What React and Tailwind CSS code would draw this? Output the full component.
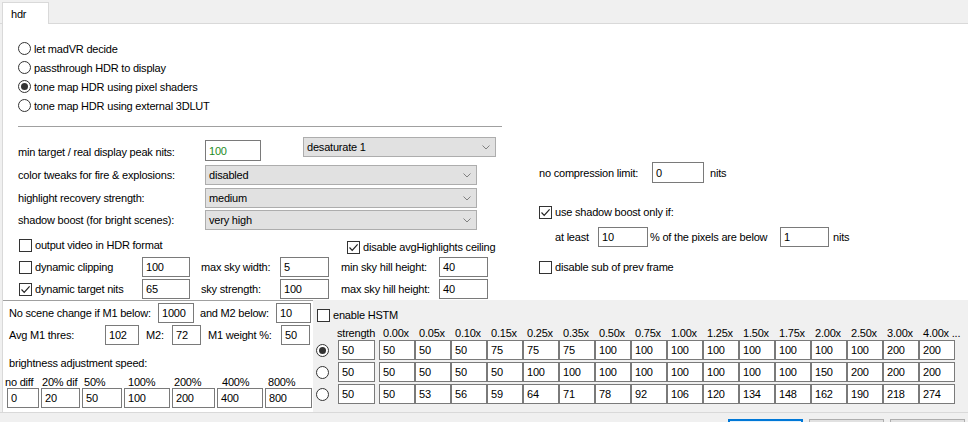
import React from "react";

const Box = ({ w, children, green }) => (
  <div
    className={`${w} h-full shrink-0 border border-[#7a7a7a] bg-white flex items-center pl-[3px] overflow-hidden whitespace-nowrap ${
      green ? "text-[#1e8b1e]" : ""
    }`}
  >
    {children}
  </div>
);

const Check = ({ checked }) => (
  <span className="w-[13px] h-[13px] shrink-0 border border-[#333333] bg-white flex items-center justify-center">
    {checked && (
      <svg width="11" height="11" viewBox="0 0 11 11">
        <path d="M1.5 5.5 L4.2 8.3 L9.6 2.4" fill="none" stroke="#222" strokeWidth="1.2" />
      </svg>
    )}
  </span>
);

const Radio = ({ checked }) => (
  <span className="w-[13px] h-[13px] shrink-0 rounded-full border border-[#333333] bg-white flex items-center justify-center">
    {checked && <span className="w-[7px] h-[7px] rounded-full bg-[#333333]" />}
  </span>
);

const Select = ({ w, value }) => (
  <div className={`${w} h-[20px] shrink-0 border border-[#adadad] bg-[#e1e1e1] flex items-center pl-[3px] pr-[5px]`}>
    <span className="flex-1 whitespace-nowrap">{value}</span>
    <svg width="8" height="5" viewBox="0 0 8 5">
      <path d="M0.5 0.5 L4 4 L7.5 0.5" fill="none" stroke="#808080" strokeWidth="1" />
    </svg>
  </div>
);

const radios = [
  ["let madVR decide", false],
  ["passthrough HDR to display", false],
  ["tone map HDR using pixel shaders", true],
  ["tone map HDR using external 3DLUT", false],
];

const headers = ["0.00x", "0.05x", "0.10x", "0.15x", "0.25x", "0.35x", "0.50x", "0.75x", "1.00x", "1.25x", "1.50x", "1.75x", "2.00x", "2.50x", "3.00x", "4.00x ..."];

const rows = [
  [true, [50, 50, 50, 75, 75, 75, 100, 100, 100, 100, 100, 100, 100, 100, 200, 200]],
  [false, [50, 50, 50, 50, 100, 100, 100, 100, 100, 100, 100, 100, 150, 200, 200, 200]],
  [false, [50, 53, 56, 59, 64, 71, 78, 92, 106, 120, 134, 148, 162, 190, 218, 274]],
];

const speedHeads = [
  ["no diff", "w-[37px]"],
  ["20% dif", "w-[42px]"],
  ["50%", "w-[44px]"],
  ["100%", "w-[46px]"],
  ["200%", "w-[48px]"],
  ["400%", "w-[46px]"],
  ["800%", "w-[44px]"],
];

const speedBoxes = [
  ["0", "w-[32px]"],
  ["20", "w-[39px]"],
  ["50", "w-[40px]"],
  ["100", "w-[46px]"],
  ["200", "w-[43px]"],
  ["400", "w-[46px]"],
  ["800", "w-[47px]"],
];

export default function App() {
  return (
    <div className="w-[968px] h-[422px] overflow-hidden bg-[#f0f0f0] text-black text-[11px] leading-[14px] tracking-[-0.2px] font-['Liberation_Sans',Arial,sans-serif] flex flex-col">
      {/* tab strip */}
      <div className="h-[24px] flex shrink-0">
        <div className="w-[2px] border-b border-[#d9d9d9]" />
        <div className="w-[47px] h-[22px] self-end bg-white border-x border-t border-[#d9d9d9] pl-[8px] pt-[4px]">hdr</div>
        <div className="flex-1 border-b border-[#d9d9d9]" />
      </div>

      {/* panel */}
      <div className="ml-[2px] h-[388px] shrink-0 border-l border-[#d9d9d9] bg-white flex flex-col">
        {/* upper section */}
        <div className="h-[276px] flex">
          <div className="w-[533px] flex flex-col pt-[15px]">
            <div className="pl-[15px] flex flex-col">
              {radios.map(([t, c]) => (
                <div key={t} className="h-[19px] flex items-center gap-[3px]">
                  <Radio checked={c} />
                  <span>{t}</span>
                </div>
              ))}
            </div>
            <div className="ml-[15px] w-[484px] h-px bg-[#a0a0a0] mt-[11px]" />

            <div className="mt-[10px] h-[24px] flex items-start pl-[15px]">
              <span className="w-[187px] mt-[8px]">min target / real display peak nits:</span>
              <div className="h-[21px] mt-[3px]">
                <Box w="w-[56px]" green>100</Box>
              </div>
              <div className="ml-[42px]">
                <Select w="w-[193px]" value="desaturate 1" />
              </div>
            </div>
            <div className="mt-[4px] h-[20px] flex items-center pl-[15px]">
              <span className="w-[187px]">color tweaks for fire &amp; explosions:</span>
              <Select w="w-[272px]" value="disabled" />
            </div>
            <div className="mt-[3px] h-[20px] flex items-center pl-[15px]">
              <span className="w-[187px]">highlight recovery strength:</span>
              <Select w="w-[272px]" value="medium" />
            </div>
            <div className="mt-[2px] h-[20px] flex items-center pl-[15px]">
              <span className="w-[187px]">shadow boost (for bright scenes):</span>
              <Select w="w-[272px]" value="very high" />
            </div>

            <div className="mt-[7px] h-[16px] flex items-center pl-[16px]">
              <span className="w-[328px] flex items-center gap-[3px]">
                <Check />
                <span>output video in HDR format</span>
              </span>
              <span className="flex items-center gap-[3px] mt-[4px]">
                <Check checked />
                <span>disable avgHighlights ceiling</span>
              </span>
            </div>

            <div className="mt-[4px] h-[20px] flex items-center pl-[16px]">
              <span className="w-[123px] flex items-center gap-[3px]">
                <Check />
                <span>dynamic clipping</span>
              </span>
              <Box w="w-[48px]">100</Box>
              <span className="ml-[11px] w-[79px]">max sky width:</span>
              <Box w="w-[49px]">5</Box>
              <span className="ml-[12px] w-[98px]">min sky hill height:</span>
              <Box w="w-[49px]">40</Box>
            </div>
            <div className="mt-[2px] h-[20px] flex items-center pl-[16px]">
              <span className="w-[123px] flex items-center gap-[3px]">
                <Check checked />
                <span>dynamic target nits</span>
              </span>
              <Box w="w-[48px]">65</Box>
              <span className="ml-[11px] w-[79px]">sky strength:</span>
              <Box w="w-[49px]">100</Box>
              <span className="ml-[12px] w-[98px]">max sky hill height:</span>
              <Box w="w-[49px]">40</Box>
            </div>
          </div>

          <div className="flex-1 flex flex-col pl-[3px] pt-[138px]">
            <div className="h-[21px] flex items-center">
              <span className="w-[113px]">no compression limit:</span>
              <Box w="w-[52px]">0</Box>
              <span className="ml-[6px]">nits</span>
            </div>
            <div className="mt-[21px] h-[16px] flex items-center gap-[3px]">
              <Check checked />
              <span>use shadow boost only if:</span>
            </div>
            <div className="mt-[7px] h-[20px] flex items-center pl-[16px]">
              <span className="w-[43px]">at least</span>
              <Box w="w-[50px]">10</Box>
              <span className="ml-[2px] w-[130px]">% of the pixels are below</span>
              <Box w="w-[49px]">1</Box>
              <span className="ml-[4px]">nits</span>
            </div>
            <div className="mt-[12px] h-[16px] flex items-center gap-[3px]">
              <Check />
              <span>disable sub of prev frame</span>
            </div>
          </div>
        </div>

        {/* lower section */}
        <div className="h-[112px] flex">
          <div className="w-[310px] shrink-0 border-t border-[#a0a0a0] flex flex-col">
            <div className="mt-[2px] h-[20px] flex items-center pl-[6px]">
              <span className="w-[149px]">No scene change if M1 below:</span>
              <Box w="w-[36px]">1000</Box>
              <span className="ml-[6px] w-[76px]">and M2 below:</span>
              <Box w="w-[35px]">10</Box>
            </div>
            <div className="mt-[2px] h-[20px] flex items-center pl-[6px]">
              <span className="w-[96px]">Avg M1 thres:</span>
              <Box w="w-[34px]">102</Box>
              <span className="ml-[7px] w-[26px]">M2:</span>
              <Box w="w-[29px]">72</Box>
              <span className="ml-[7px] w-[73px]">M1 weight %:</span>
              <Box w="w-[29px]">50</Box>
            </div>
            <div className="mt-[10px] h-[16px] flex items-center pl-[6px]">brightness adjustment speed:</div>
            <div className="mt-[4px] h-[13px] flex items-center pl-[2px] whitespace-nowrap">
              {speedHeads.map(([t, w]) => (
                <span key={t} className={w}>
                  {t}
                </span>
              ))}
            </div>
            <div className="h-[20px] flex pl-[4px] gap-[2px]">
              {speedBoxes.map(([t, w]) => (
                <Box key={t} w={w}>
                  {t}
                </Box>
              ))}
            </div>
          </div>

          <div className="flex-1 bg-[#f0f0f0] flex flex-col">
            <div className="mt-[8px] h-[14px] flex items-center pl-[4px] gap-[3px]">
              <Check />
              <span>enable HSTM</span>
            </div>
            <div className="mt-[4px] h-[14px] flex items-center pl-[24px] whitespace-nowrap">
              <span className="w-[46px] shrink-0">strength</span>
              {headers.map((h) => (
                <span key={h} className="w-[36px] shrink-0">
                  {h}
                </span>
              ))}
            </div>
            <div className="flex flex-col gap-[2px]">
              {rows.map(([sel, vals], i) => (
                <div key={i} className="h-[20px] flex items-center pl-[3px]">
                  <Radio checked={sel} />
                  <div className="ml-[9px] h-full flex">
                    <Box w="w-[37px]">50</Box>
                  </div>
                  <div className="ml-[4px] h-full flex">
                    {vals.map((v, j) => (
                      <Box key={j} w="w-[36px]">
                        {v}
                      </Box>
                    ))}
                  </div>
                </div>
              ))}
            </div>
          </div>
        </div>
      </div>

      {/* bottom strip */}
      <div className="flex-1 border-t border-[#d9d9d9] flex justify-end pr-[3px] pt-[6px] gap-[6px]">
        <div className="w-[75px] h-[23px] shrink-0 bg-[#e5f1fb] border-2 border-[#0078d7]" />
        <div className="w-[75px] h-[23px] shrink-0 bg-[#e1e1e1] border border-[#adadad]" />
        <div className="w-[75px] h-[23px] shrink-0 bg-[#e1e1e1] border border-[#adadad]" />
      </div>
    </div>
  );
}
